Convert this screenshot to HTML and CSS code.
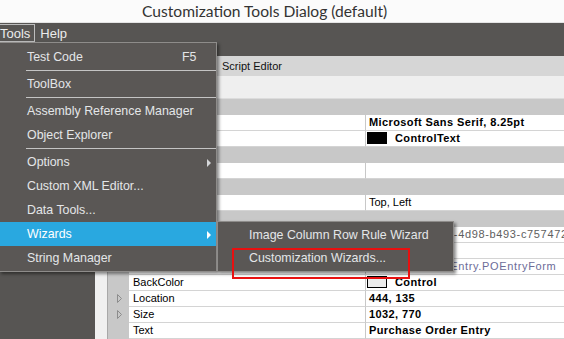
FILE: index.html
```html
<!DOCTYPE html>
<html>
<head>
    <title>Customization Tools Dialog</title>
    <link rel="stylesheet" href="styles.css">
</head>
<body>
    <div class="window">
        <div class="titlebar">Customization Tools Dialog (default)</div>

        <div class="menubar">
            <span class="menubar-item open">Tools</span>
            <span class="menubar-item">Help</span>
        </div>

        <div class="main">
            <div class="sidebar"></div>
            <div class="content">
                <div class="tabstrip"><span class="tab">Script Editor</span></div>
                <div class="toolbar"></div>

                <!-- Property grid -->
                <div class="grid-wrap">
                    <div class="grid-pad"></div>
                    <div class="props">
                        <div class="row category"><span class="gutter"></span><span class="name">Appearance</span><span class="value"></span></div>
                        <div class="row"><span class="gutter"></span><span class="name">Font</span><span class="value bold">Microsoft Sans Serif, 8.25pt</span></div>
                        <div class="row"><span class="gutter"></span><span class="name">ForeColor</span><span class="value bold swatched"><i class="swatch dark"></i>ControlText</span></div>
                        <div class="row category"><span class="gutter"></span><span class="name">Behavior</span><span class="value"></span></div>
                        <div class="row"><span class="gutter"></span><span class="name">Enabled</span><span class="value"></span></div>
                        <div class="row category"><span class="gutter"></span><span class="name">Layout</span><span class="value"></span></div>
                        <div class="row"><span class="gutter"></span><span class="name">Anchor</span><span class="value">Top, Left</span></div>
                        <div class="row category"><span class="gutter"></span><span class="name">Misc</span><span class="value"></span></div>
                        <div class="row"><span class="gutter"></span><span class="name muted">(EpiGuid)</span><span class="value muted guid">8f3a21c6-7e0b-4d98-b493-c757472e1a0f</span></div>
                        <div class="row"><span class="gutter"></span><span class="name muted">(Name)</span><span class="value"></span></div>
                        <div class="row"><span class="gutter"></span><span class="name muted">(Type)</span><span class="value readonly">Erp.UI.App.POEntry.POEntryForm</span></div>
                        <div class="row"><span class="gutter"></span><span class="name">BackColor</span><span class="value bold swatched"><i class="swatch light"></i>Control</span></div>
                        <div class="row"><span class="gutter"><svg class="expander" width="5" height="9" viewBox="0 0 5 9"><polygon points="0.5,0.5 4.5,4.5 0.5,8.5" /></svg></span><span class="name">Location</span><span class="value bold">444, 135</span></div>
                        <div class="row"><span class="gutter"><svg class="expander" width="5" height="9" viewBox="0 0 5 9"><polygon points="0.5,0.5 4.5,4.5 0.5,8.5" /></svg></span><span class="name">Size</span><span class="value bold">1032, 770</span></div>
                        <div class="row"><span class="gutter"></span><span class="name">Text</span><span class="value bold">Purchase Order Entry</span></div>
                    </div>
                </div>
            </div>
        </div>

        <!-- Tools dropdown -->
        <div class="menu tools-menu">
            <div class="menu-item">Test Code<span class="shortcut">F5</span></div>
            <div class="menu-sep"></div>
            <div class="menu-item">ToolBox</div>
            <div class="menu-sep"></div>
            <div class="menu-item">Assembly Reference Manager</div>
            <div class="menu-item">Object Explorer</div>
            <div class="menu-sep"></div>
            <div class="menu-item">Options<span class="arrow"></span></div>
            <div class="menu-item">Custom XML Editor...</div>
            <div class="menu-item">Data Tools...</div>
            <div class="menu-item active">Wizards<span class="arrow"></span></div>
            <div class="menu-item">String Manager</div>
        </div>

        <!-- Wizards submenu -->
        <div class="menu wizards-menu">
            <div class="menu-item">Image Column Row Rule Wizard</div>
            <div class="menu-item">Customization Wizards...</div>
        </div>

        <div class="callout"></div>
    </div>
</body>
</html>
```

FILE: styles.css
```css
body {
    margin: 0;
    overflow: hidden;
    font-family: "Liberation Sans", Arial, sans-serif;
}
.window {
    position: relative;
    width: 564px;
    height: 339px;
    overflow: hidden;
    background: #575553;
}
.titlebar {
    height: 23px;
    line-height: 22px;
    padding-left: 142px;
    background: #fbfbfb;
    color: #333;
    font-family: Lato, "Open Sans", sans-serif;
    font-size: 15.6px;
    border-bottom: 1px solid #e4e4e4;
    box-sizing: border-box;
}
.menubar {
    height: 24px;
    display: flex;
    align-items: flex-start;
    padding-top: 1px;
    box-sizing: border-box;
    color: #ececec;
    font-size: 13px;
}
.menubar-item {
    height: 18px;
    line-height: 17px;
    padding: 0 4px 0 4px;
    border: 1px solid transparent;
    box-sizing: border-box;
}
.menubar-item.open {
    padding: 0 4px 0 0;
    border-color: #bdbdbd;
    border-left: 0;
}
.main {
    display: flex;
    height: 292px;
}
.sidebar {
    width: 95px;
    background: #575553;
}
.content {
    flex: 1;
    display: flex;
    flex-direction: column;
    padding-top: 9px;
}
.tabstrip {
    height: 20px;
    background: #d6d6d6;
    font-size: 11px;
    line-height: 20px;
    color: #111;
}
.tab {
    margin-left: 127px;
}
.toolbar {
    height: 26px;
    background: #efefef;
    border-bottom: 1px solid #dcdcdc;
}
.grid-wrap {
    flex: 1;
    display: flex;
}
.grid-pad {
    width: 12px;
    background: #f0f0f0;
}
.props {
    flex: 1;
    border-left: 1px solid #a8a8a8;
    font-size: 11px;
}
.row {
    display: grid;
    grid-template-columns: 21px 237px 1fr;
    height: 16px;
}
.row span {
    height: 16px;
    line-height: 15px;
    box-sizing: border-box;
    white-space: nowrap;
    overflow: hidden;
}
.gutter {
    background: #c8c8c8;
    display: flex;
    align-items: center;
    padding: 0 0 1px 9px;
}
.name {
    background: #fff;
    padding-left: 4px;
    border-right: 1px solid #c8c8c8;
    border-bottom: 1px solid #d4d4d4;
    color: #000;
}
.value {
    background: #fff;
    padding-left: 3px;
    border-bottom: 1px solid #d4d4d4;
    color: #000;
}
.row.category span {
    background: #c8c8c8;
    border: 0;
    font-weight: bold;
}
.bold {
    font-weight: bold;
    letter-spacing: 0.4px;
}
.muted {
    color: #5e5e5e;
}
.value.muted,
.readonly {
    letter-spacing: 0.65px;
}
.guid {
    padding-left: 6px;
}
.readonly {
    color: #6c6c98;
}
.value.swatched {
    padding-left: 1px;
    display: flex;
    align-items: center;
}
.swatch {
    display: inline-block;
    width: 20px;
    height: 12px;
    margin: 0 8px 1px 0;
    box-sizing: border-box;
    border: 1px solid #000;
}
.swatch.dark {
    background: #000;
}
.swatch.light {
    background: #ececec;
}
.expander polygon {
    fill: none;
    stroke: #8c8c8c;
    stroke-width: 1;
}

/* dropdown menus */
.menu {
    position: absolute;
    background: #5a5755;
    border: 1px solid #8e8c8a;
    box-shadow: 2px 2px 3px rgba(0,0,0,0.45);
    color: #e4e6e8;
    font-size: 12.4px;
}
.tools-menu {
    left: -1px;
    top: 42px;
    width: 218px;
    padding: 2px 0 1px 0;
    box-sizing: border-box;
}
.menu-item {
    position: relative;
    height: 24px;
    line-height: 24px;
    padding-left: 27px;
    white-space: nowrap;
}
.menu-item.active {
    background: #29a8e0;
    color: #fff;
}
.shortcut {
    position: absolute;
    left: 182px;
}
.arrow {
    position: absolute;
    left: 207px;
    top: 9px;
    width: 0;
    height: 0;
    border-top: 4px solid transparent;
    border-bottom: 4px solid transparent;
    border-left: 4px solid #d4d6d8;
}
.active .arrow {
    border-left-color: #fff;
}
.menu-sep {
    height: 3px;
    margin-left: 26px;
    background: linear-gradient(#5a5755 1px, #c4c4c4 1px, #c4c4c4 2px, #5a5755 2px);
}
.wizards-menu {
    left: 217px;
    top: 221px;
    width: 237px;
    padding: 2px 0 1px 0;
    box-sizing: border-box;
}
.wizards-menu .menu-item {
    height: 23px;
    line-height: 23px;
    padding-left: 31px;
}
.callout {
    position: absolute;
    left: 232px;
    top: 248px;
    width: 178px;
    height: 31px;
    border: 2px solid #e81010;
    box-sizing: border-box;
}
```
